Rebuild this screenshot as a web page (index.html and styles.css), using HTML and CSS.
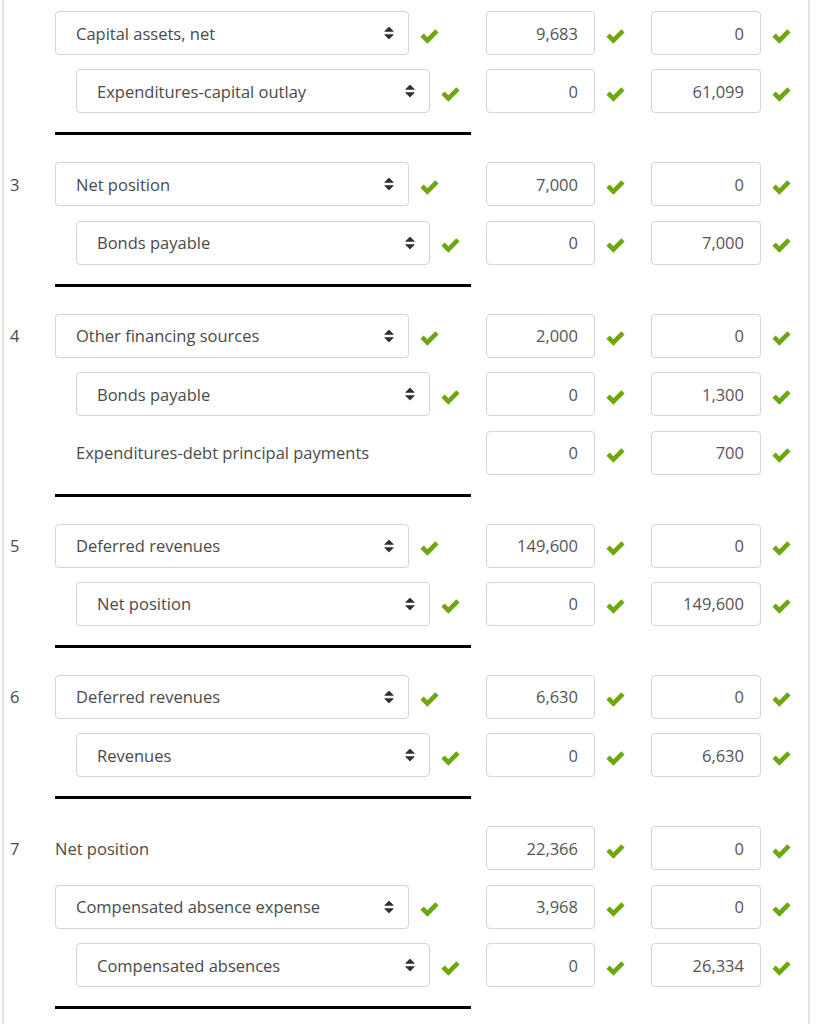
FILE: index.html
```html
<!DOCTYPE html>
<html>
<head>
<meta charset="utf-8">
<link rel="stylesheet" href="styles.css">
</head>
<body>
<svg width="0" height="0" class="defs">
  <defs>
    <symbol id="chk" viewBox="0 0 18 16"><path d="M0.4 9.2 L3.5 6.1 L7 9.6 L14.5 2.1 L17.6 5.2 L7 15.8 Z"/></symbol>
    <symbol id="sort" viewBox="0 0 1024 1792"><path d="M1024 1088q0 26-19 45l-448 448q-19 19-45 19t-45-19l-448-448q-19-19-19-45t19-45 45-19h896q26 0 45 19t19 45zm0-384q0 26-19 45t-45 19h-896q-26 0-45-19t-19-45 19-45l448-448q19-19 45-19t45 19l448 448q19 19 19 45z"/></symbol>
  </defs>
</svg>
<div class="page">

  <div class="group">
    <div class="row">
      <div class="num"></div>
      <div class="label"><div class="select"><span>Capital assets, net</span><svg class="sort"><use href="#sort"/></svg></div><svg class="check"><use href="#chk"/></svg></div>
      <div class="amt">9,683</div><svg class="check"><use href="#chk"/></svg>
      <div class="amt second">0</div><svg class="check"><use href="#chk"/></svg>
    </div>
    <div class="row">
      <div class="num"></div>
      <div class="label indent"><div class="select"><span>Expenditures-capital outlay</span><svg class="sort"><use href="#sort"/></svg></div><svg class="check"><use href="#chk"/></svg></div>
      <div class="amt">0</div><svg class="check"><use href="#chk"/></svg>
      <div class="amt second">61,099</div><svg class="check"><use href="#chk"/></svg>
    </div>
    <div class="rule"></div>
  </div>

  <div class="group">
    <div class="row">
      <div class="num">3</div>
      <div class="label"><div class="select"><span>Net position</span><svg class="sort"><use href="#sort"/></svg></div><svg class="check"><use href="#chk"/></svg></div>
      <div class="amt">7,000</div><svg class="check"><use href="#chk"/></svg>
      <div class="amt second">0</div><svg class="check"><use href="#chk"/></svg>
    </div>
    <div class="row">
      <div class="num"></div>
      <div class="label indent"><div class="select"><span>Bonds payable</span><svg class="sort"><use href="#sort"/></svg></div><svg class="check"><use href="#chk"/></svg></div>
      <div class="amt">0</div><svg class="check"><use href="#chk"/></svg>
      <div class="amt second">7,000</div><svg class="check"><use href="#chk"/></svg>
    </div>
    <div class="rule"></div>
  </div>

  <div class="group">
    <div class="row">
      <div class="num">4</div>
      <div class="label"><div class="select"><span>Other financing sources</span><svg class="sort"><use href="#sort"/></svg></div><svg class="check"><use href="#chk"/></svg></div>
      <div class="amt">2,000</div><svg class="check"><use href="#chk"/></svg>
      <div class="amt second">0</div><svg class="check"><use href="#chk"/></svg>
    </div>
    <div class="row">
      <div class="num"></div>
      <div class="label indent"><div class="select"><span>Bonds payable</span><svg class="sort"><use href="#sort"/></svg></div><svg class="check"><use href="#chk"/></svg></div>
      <div class="amt">0</div><svg class="check"><use href="#chk"/></svg>
      <div class="amt second">1,300</div><svg class="check"><use href="#chk"/></svg>
    </div>
    <div class="row">
      <div class="num"></div>
      <div class="label indent"><span class="plain">Expenditures-debt principal payments</span></div>
      <div class="amt">0</div><svg class="check"><use href="#chk"/></svg>
      <div class="amt second">700</div><svg class="check"><use href="#chk"/></svg>
    </div>
    <div class="rule"></div>
  </div>

  <div class="group">
    <div class="row">
      <div class="num">5</div>
      <div class="label"><div class="select"><span>Deferred revenues</span><svg class="sort"><use href="#sort"/></svg></div><svg class="check"><use href="#chk"/></svg></div>
      <div class="amt">149,600</div><svg class="check"><use href="#chk"/></svg>
      <div class="amt second">0</div><svg class="check"><use href="#chk"/></svg>
    </div>
    <div class="row">
      <div class="num"></div>
      <div class="label indent"><div class="select"><span>Net position</span><svg class="sort"><use href="#sort"/></svg></div><svg class="check"><use href="#chk"/></svg></div>
      <div class="amt">0</div><svg class="check"><use href="#chk"/></svg>
      <div class="amt second">149,600</div><svg class="check"><use href="#chk"/></svg>
    </div>
    <div class="rule"></div>
  </div>

  <div class="group">
    <div class="row">
      <div class="num">6</div>
      <div class="label"><div class="select"><span>Deferred revenues</span><svg class="sort"><use href="#sort"/></svg></div><svg class="check"><use href="#chk"/></svg></div>
      <div class="amt">6,630</div><svg class="check"><use href="#chk"/></svg>
      <div class="amt second">0</div><svg class="check"><use href="#chk"/></svg>
    </div>
    <div class="row">
      <div class="num"></div>
      <div class="label indent"><div class="select"><span>Revenues</span><svg class="sort"><use href="#sort"/></svg></div><svg class="check"><use href="#chk"/></svg></div>
      <div class="amt">0</div><svg class="check"><use href="#chk"/></svg>
      <div class="amt second">6,630</div><svg class="check"><use href="#chk"/></svg>
    </div>
    <div class="rule"></div>
  </div>

  <div class="group">
    <div class="row">
      <div class="num">7</div>
      <div class="label"><span class="plain">Net position</span></div>
      <div class="amt">22,366</div><svg class="check"><use href="#chk"/></svg>
      <div class="amt second">0</div><svg class="check"><use href="#chk"/></svg>
    </div>
    <div class="row">
      <div class="num"></div>
      <div class="label"><div class="select"><span>Compensated absence expense</span><svg class="sort"><use href="#sort"/></svg></div><svg class="check"><use href="#chk"/></svg></div>
      <div class="amt">3,968</div><svg class="check"><use href="#chk"/></svg>
      <div class="amt second">0</div><svg class="check"><use href="#chk"/></svg>
    </div>
    <div class="row">
      <div class="num"></div>
      <div class="label indent"><div class="select"><span>Compensated absences</span><svg class="sort"><use href="#sort"/></svg></div><svg class="check"><use href="#chk"/></svg></div>
      <div class="amt">0</div><svg class="check"><use href="#chk"/></svg>
      <div class="amt second">26,334</div><svg class="check"><use href="#chk"/></svg>
    </div>
    <div class="rule"></div>
  </div>

</div>
</body>
</html>
```
FILE: styles.css
```css
html, body {
  margin: 0;
  padding: 0;
  background: #ffffff;
  height: 100%;
}

body {
  font-family: "Open Sans", "Liberation Sans", sans-serif;
  font-size: 16.5px;
  color: #4a4a4a;
}

.defs {
  position: absolute;
  width: 0;
  height: 0;
}

.page {
  margin-left: 2px;
  width: 808px;
  min-height: 100%;
  box-sizing: border-box;
  border-left: 2px solid #e4e4e4;
  border-right: 2px solid #e4e4e4;
  padding-top: 11px;
}

.group {
  display: flex;
  flex-direction: column;
  gap: 14.4px;
  margin-bottom: 27px;
}

.row {
  display: flex;
  align-items: center;
  height: 44px;
}

.num {
  width: 51px;
  padding-left: 6px;
  box-sizing: border-box;
  flex: none;
}

.label {
  width: 431px;
  flex: none;
  display: flex;
  align-items: center;
  box-sizing: border-box;
}

.label.indent {
  padding-left: 21px;
}

.select {
  width: 354px;
  height: 44px;
  box-sizing: border-box;
  border: 1px solid #d4d4d4;
  border-radius: 4px;
  display: flex;
  align-items: center;
  justify-content: space-between;
  padding: 0 14px 0 20px;
  background: #fff;
}

.sort {
  width: 10px;
  height: 16px;
  fill: #2f2f2f;
}

.check {
  width: 19px;
  height: 17px;
  margin-left: 11px;
  margin-top: 4px;
  fill: #6ea70c;
  flex: none;
}

.amt {
  width: 109px;
  height: 44px;
  flex: none;
  box-sizing: border-box;
  border: 1px solid #d4d4d4;
  border-radius: 4px;
  display: flex;
  align-items: center;
  justify-content: flex-end;
  padding-right: 16px;
  color: #555;
}

.amt.second {
  width: 110px;
  margin-left: 26px;
}

.rule {
  margin-left: 51px;
  width: 416px;
  height: 3px;
  background: #000;
  margin-top: 4.6px;
}
```
